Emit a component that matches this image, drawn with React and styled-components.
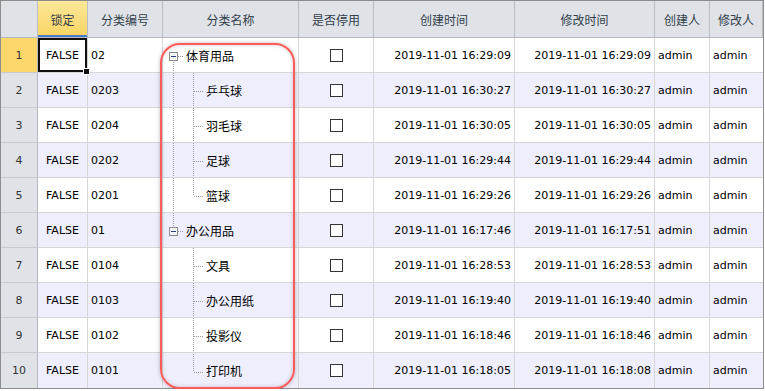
import styled, { createGlobalStyle, css } from 'styled-components'

const GlobalStyle = createGlobalStyle`
    html, body {
        margin: 0;
        padding: 0;
        background: #fff;
    }
    body {
        font-family: "DejaVu Sans", "Noto Sans CJK SC", sans-serif;
    }
`

const COLS = [37, 50, 75, 136, 75, 141, 140, 55, 53]

const HEADERS = ['锁定', '分类编号', '分类名称', '是否停用', '创建时间', '修改时间', '创建人', '修改人']

const ROWS = [
    { code: '02', name: '体育用品', level: 0, first: true, lastRoot: false, created: '2019-11-01 16:29:09', modified: '2019-11-01 16:29:09' },
    { code: '0203', name: '乒乓球', level: 1, parentLast: false, created: '2019-11-01 16:30:27', modified: '2019-11-01 16:30:27' },
    { code: '0204', name: '羽毛球', level: 1, parentLast: false, created: '2019-11-01 16:30:05', modified: '2019-11-01 16:30:05' },
    { code: '0202', name: '足球', level: 1, parentLast: false, created: '2019-11-01 16:29:44', modified: '2019-11-01 16:29:44' },
    { code: '0201', name: '篮球', level: 1, parentLast: false, lastChild: true, created: '2019-11-01 16:29:26', modified: '2019-11-01 16:29:26' },
    { code: '01', name: '办公用品', level: 0, first: false, lastRoot: true, created: '2019-11-01 16:17:46', modified: '2019-11-01 16:17:51' },
    { code: '0104', name: '文具', level: 1, parentLast: true, created: '2019-11-01 16:28:53', modified: '2019-11-01 16:28:53' },
    { code: '0103', name: '办公用纸', level: 1, parentLast: true, created: '2019-11-01 16:19:40', modified: '2019-11-01 16:19:40' },
    { code: '0102', name: '投影仪', level: 1, parentLast: true, created: '2019-11-01 16:18:46', modified: '2019-11-01 16:18:46' },
    { code: '0101', name: '打印机', level: 1, parentLast: true, lastChild: true, created: '2019-11-01 16:18:05', modified: '2019-11-01 16:18:08' },
]

const Frame = styled.div`
    position: relative;
    width: 764px;
    box-sizing: border-box;
    border: 1px solid #8d8d8d;
    display: grid;
    grid-template-columns: ${COLS.map((w) => w + 'px').join(' ')};
    grid-template-rows: 37px repeat(10, 35px);
`

const HeadCell = styled.div`
    box-sizing: border-box;
    display: flex;
    align-items: center;
    justify-content: center;
    background: #dfe3e8;
    border-right: 1px solid #b9bec4;
    border-bottom: 1px solid #b4b9bf;
    font-family: "Noto Sans CJK SC", sans-serif;
    font-size: 12px;
    color: #33404b;
    &:last-child {
        border-right: none;
    }
    ${(props) =>
        props.$active &&
        css`
            background: linear-gradient(#fde79a, #f8d462);
            box-shadow: inset 0 -2px 0 #4a7cc6;
        `}
`

const RowHead = styled.div`
    box-sizing: border-box;
    display: flex;
    align-items: center;
    justify-content: center;
    background: ${(props) => (props.$active ? '#fcd86c' : '#dfe3e8')};
    border-right: 1px solid #b4b9bf;
    border-bottom: ${(props) => (props.$last ? 'none' : '1px solid #c6cbd0')};
    font-size: 11px;
    color: #333;
`

const Cell = styled.div`
    position: relative;
    box-sizing: border-box;
    display: flex;
    align-items: center;
    justify-content: ${(props) => props.$align || 'flex-start'};
    padding: 0 3px;
    background: ${(props) => (props.$alt ? '#eeeefc' : '#fff')};
    border-right: ${(props) => (props.$end ? 'none' : '1px solid #d6d6d9')};
    border-bottom: ${(props) => (props.$last ? 'none' : '1px solid #d6d6d9')};
    font-size: 11px;
    color: #000;
    white-space: nowrap;
    ${(props) =>
        props.$selected &&
        css`
            box-shadow: inset 0 0 0 2px #111;
        `}
`

const FillHandle = styled.span`
    position: absolute;
    right: -3px;
    bottom: -3px;
    width: 5px;
    height: 5px;
    background: #111;
    border: 1px solid #fff;
    z-index: 2;
`

const TreeCell = styled(Cell)`
    padding: 0;
    svg {
        flex: none;
        display: block;
    }
`

const TreeLabel = styled.span`
    font-family: "Noto Sans CJK SC", sans-serif;
    font-size: 12px;
    color: #000;
    margin-left: 1px;
`

const Check = styled.span`
    width: 13px;
    height: 13px;
    box-sizing: border-box;
    border: 1.5px solid #333;
    background: #fff;
`

const Annotation = styled.div`
    position: absolute;
    left: 159px;
    top: 42px;
    width: 135px;
    height: 346px;
    box-sizing: border-box;
    border: 2px solid #ff5a5a;
    border-radius: 20px;
    box-shadow: 0 0 4px rgba(0, 0, 0, 0.25), inset 0 0 4px rgba(0, 0, 0, 0.18);
    pointer-events: none;
`

const dot = { stroke: '#9a9a9a', strokeWidth: 1, strokeDasharray: '1 1' }

const TreeGuide = ({ row }) => {
    if (row.level === 0) {
        return (
            <svg width="22" height="34">
                {!row.first && <line x1="10.5" y1="0" x2="10.5" y2="14" style={dot} />}
                {!row.lastRoot && <line x1="10.5" y1="22" x2="10.5" y2="34" style={dot} />}
                <line x1="15" y1="18.5" x2="21" y2="18.5" style={dot} />
                <rect x="6.5" y="14.5" width="8" height="8" fill="#f4f4f4" stroke="#8a8a8a" />
                <line x1="8" y1="18.5" x2="13" y2="18.5" stroke="#2c3f86" />
                <line x1="30.5" y1="30" x2="30.5" y2="34" style={dot} />
            </svg>
        )
    }
    return (
        <svg width="42" height="34">
            {!row.parentLast && <line x1="10.5" y1="0" x2="10.5" y2="34" style={dot} />}
            <line x1="30.5" y1="0" x2="30.5" y2={row.lastChild ? 18 : 34} style={dot} />
            <line x1="31" y1="18.5" x2="41" y2="18.5" style={dot} />
        </svg>
    )
}

const App = () => {
    return (
        <>
            <GlobalStyle />
            <Frame>
                <HeadCell />
                {HEADERS.map((h, i) => (
                    <HeadCell key={h} $active={i === 0}>
                        {h}
                    </HeadCell>
                ))}
                {ROWS.map((row, i) => {
                    const alt = i % 2 === 1
                    const last = i === ROWS.length - 1
                    return [
                        <RowHead key={`h${i}`} $active={i === 0} $last={last}>
                            {i + 1}
                        </RowHead>,
                        <Cell key={`a${i}`} $alt={alt} $last={last} $align="center" $selected={i === 0}>
                            FALSE
                            {i === 0 && <FillHandle />}
                        </Cell>,
                        <Cell key={`b${i}`} $alt={alt} $last={last}>
                            {row.code}
                        </Cell>,
                        <TreeCell key={`c${i}`} $alt={alt} $last={last}>
                            <TreeGuide row={row} />
                            <TreeLabel>{row.name}</TreeLabel>
                        </TreeCell>,
                        <Cell key={`d${i}`} $alt={alt} $last={last} $align="center">
                            <Check />
                        </Cell>,
                        <Cell key={`e${i}`} $alt={alt} $last={last} $align="flex-end">
                            {row.created}
                        </Cell>,
                        <Cell key={`f${i}`} $alt={alt} $last={last} $align="flex-end">
                            {row.modified}
                        </Cell>,
                        <Cell key={`g${i}`} $alt={alt} $last={last}>
                            admin
                        </Cell>,
                        <Cell key={`k${i}`} $alt={alt} $last={last} $end>
                            admin
                        </Cell>,
                    ]
                })}
                <Annotation />
            </Frame>
        </>
    )
}

export default App
